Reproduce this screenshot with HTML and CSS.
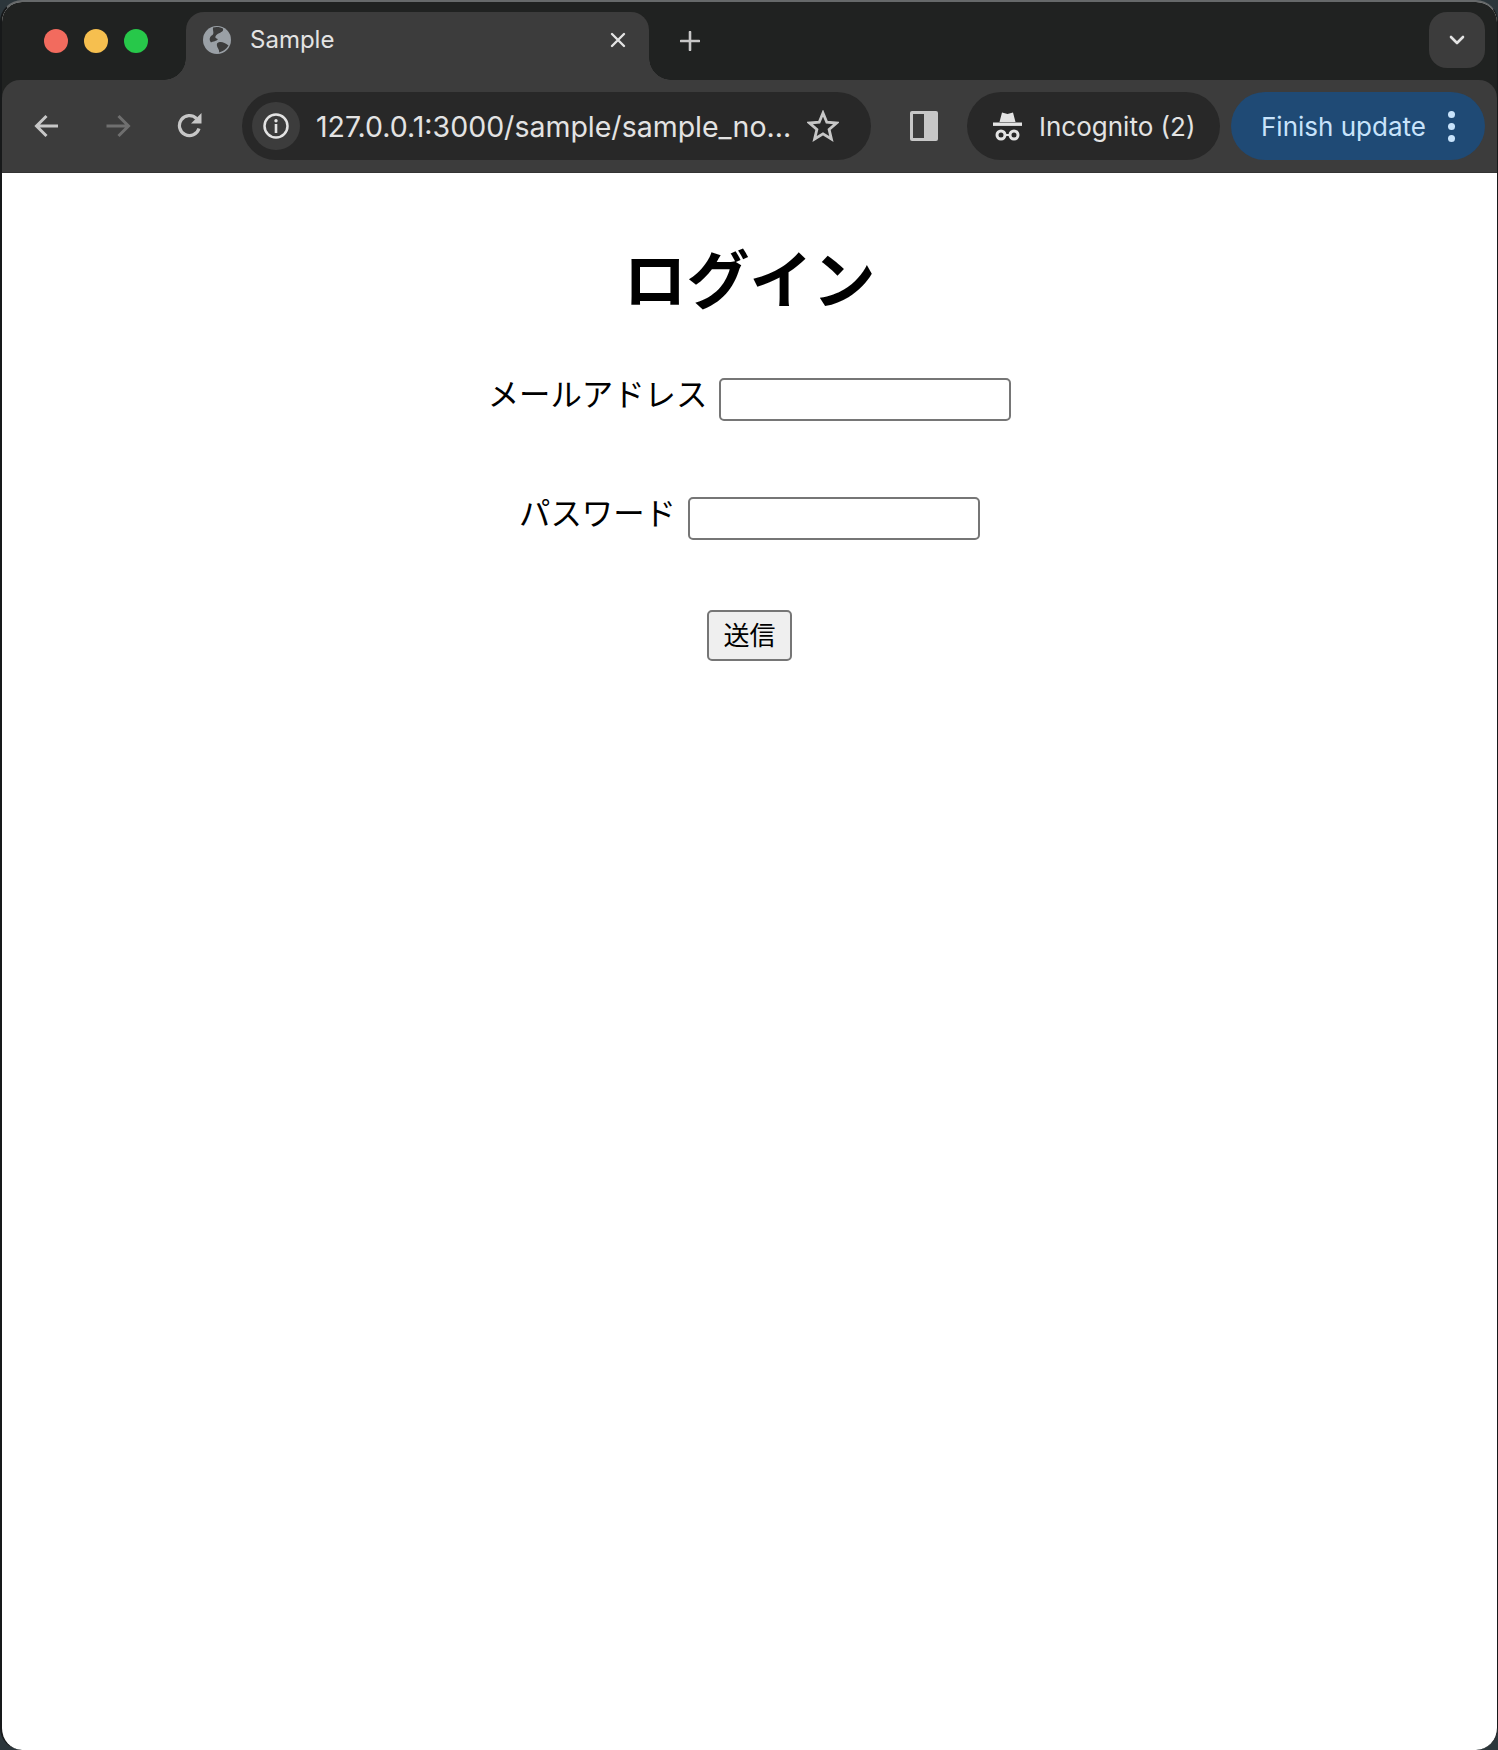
FILE: index.html
```html
<!DOCTYPE html>
<html lang="ja">
<head>
  <meta charset="UTF-8">
  <meta name="viewport" content="width=device-width, initial-scale=1.0">
  <title>Sample</title>
  <link rel="stylesheet" href="styles.css">
</head>
<body>
  <div class="window">
    <header class="browser">
      <div class="tabstrip">
        <div class="lights">
          <span class="light red"></span>
          <span class="light yellow"></span>
          <span class="light green"></span>
        </div>
        <div class="tab">
          <svg class="favicon" viewBox="0 0 28 28">
            <circle cx="14" cy="14" r="14" fill="#9aa0a6"/>
            <path d="M10 1.500 C13 0.500 18 1 20 2.500 C21 6 16.500 6.500 14 8.500 C11.500 10.500 12 12.500 15 13 C13.500 15.500 10 15 8 16.500 C5.500 13.500 7 10 9.500 9 C11.500 7.500 9.500 4.500 10 1.500 Z" fill="#3c3c3c"/>
            <path d="M14 17.500 C17 15 21 16 25.500 19.500 C23 23.500 19.500 25.500 16 26.500 C17 23 13 21.500 14 17.500 Z" fill="#3c3c3c"/>
          </svg>
          <span class="tab-title">Sample</span>
          <svg class="tab-close" viewBox="0 0 16 16">
            <path d="M2 2 L14 14 M14 2 L2 14" stroke="#e3e3e3" stroke-width="2.400" stroke-linecap="round"/>
          </svg>
        </div>
        <svg class="new-tab" viewBox="0 0 20 20">
          <path d="M10 1 V19 M1 10 H19" stroke="#c7c7c7" stroke-width="2.600" stroke-linecap="round"/>
        </svg>
        <div class="tab-search">
          <svg class="chevron" viewBox="0 0 16 10">
            <path d="M2 2 L8 8 L14 2" fill="none" stroke="#e3e3e3" stroke-width="2.600" stroke-linecap="round" stroke-linejoin="round"/>
          </svg>
        </div>
      </div>

      <div class="toolbar">
        <svg class="nav-icon back" viewBox="0 0 26 26">
          <path d="M24 13 H3.500 M12.500 3 L2.500 13 L12.500 23" fill="none" stroke="#c7c7c7" stroke-width="3"/>
        </svg>
        <svg class="nav-icon forward" viewBox="0 0 26 26">
          <path d="M1.500 13 H22.500 M13.500 3 L23.500 13 L13.500 23" fill="none" stroke="#6f6f6f" stroke-width="3"/>
        </svg>
        <svg class="nav-icon reload" viewBox="0 0 26 26">
          <path d="M22 15.500 A10 10 0 1 1 19.500 5.500" fill="none" stroke="#c7c7c7" stroke-width="3.200"/>
          <path d="M14 10.500 H24.500 V0 Z" fill="#c7c7c7"/>
        </svg>
        <div class="omnibox">
          <span class="site-info">
            <svg class="info-icon" viewBox="0 0 28 28">
              <circle cx="14" cy="14" r="11.500" fill="none" stroke="#e3e3e3" stroke-width="2.500"/>
              <circle cx="14" cy="8.800" r="1.700" fill="#e3e3e3"/>
              <rect x="12.700" y="12" width="2.600" height="9" fill="#e3e3e3"/>
            </svg>
          </span>
          <span class="url">127.0.0.1:3000/sample/sample_no...</span>
          <svg class="star" viewBox="0 0 32 32">
            <path d="M16 3 L19.800 12.200 L29.500 13 L22.100 19.400 L24.400 29 L16 23.800 L7.600 29 L9.900 19.400 L2.500 13 L12.200 12.200 Z" fill="none" stroke="#c7c7c7" stroke-width="2.800"/>
          </svg>
        </div>
        <svg class="side-panel" viewBox="0 0 28 30">
          <rect x="0" y="0" width="28" height="30" rx="2" fill="#c7c7c7"/>
          <rect x="3" y="3" width="11" height="24" fill="#3c3c3c"/>
        </svg>
        <div class="profile">
          <svg class="incognito" viewBox="0 0 29 31">
            <path d="M6.500 11 L9 1.500 L14.500 3 L20 1.500 L22.500 11 Z" fill="#e3e3e3"/>
            <rect x="0" y="11.500" width="29" height="3.400" fill="#e3e3e3"/>
            <circle cx="8" cy="24" r="4" fill="none" stroke="#e3e3e3" stroke-width="3"/>
            <circle cx="21" cy="24" r="4" fill="none" stroke="#e3e3e3" stroke-width="3"/>
            <rect x="11" y="23" width="7" height="2" fill="#e3e3e3"/>
          </svg>
          <span>Incognito (2)</span>
        </div>
        <div class="update">
          <span>Finish update</span>
          <span class="dots"><i></i><i></i><i></i></span>
        </div>
      </div>
    </header>

    <main class="page">
      <h1>ログイン</h1>
      <form>
        <div class="field">
          <label for="email">メールアドレス</label>
          <input id="email" type="text">
        </div>
        <div class="field">
          <label for="password">パスワード</label>
          <input id="password" type="password">
        </div>
        <div class="actions">
          <button type="submit">送信</button>
        </div>
      </form>
    </main>
  </div>
</body>
</html>
```

FILE: styles.css
```css
* {
  box-sizing: border-box;
}

body {
  margin: 0;
  background-color: #2c363b;
  font-family: Inter, "Noto Sans CJK JP", sans-serif;
}

.window {
  width: 1498px;
  height: 1750px;
  display: flex;
  flex-direction: column;
  background-color: #fff;
  border-left: 2px solid #17191a;
  border-right: 1px solid #17191a;
  border-top: 2px solid #66696a;
  border-radius: 22px;
  overflow: hidden;
}

.browser {
  flex-shrink: 0;
  background-color: #202221;
}

/* tab strip */
.tabstrip {
  height: 78px;
  display: flex;
  align-items: flex-start;
  padding-top: 10px;
}

.lights {
  display: flex;
  gap: 16px;
  margin: 17px 38px 0 42px;
}

.light {
  width: 24px;
  height: 24px;
  border-radius: 50%;
}

.red { background-color: #f26b5e; }
.yellow { background-color: #f6bf4f; }
.green { background-color: #27c84a; }

.tab {
  position: relative;
  width: 463px;
  height: 68px;
  display: flex;
  align-items: flex-start;
  padding: 14px 23px 0 17px;
  background-color: #3c3c3c;
  border-radius: 18px 18px 0 0;
  color: #e3e3e3;
  font-size: 24px;
}

.tab::before,
.tab::after {
  content: "";
  position: absolute;
  bottom: 0;
  width: 22px;
  height: 22px;
}

.tab::before {
  left: -22px;
  background: radial-gradient(circle at 0 0, transparent 21.500px, #3c3c3c 22px);
}

.tab::after {
  right: -22px;
  background: radial-gradient(circle at 100% 0, transparent 21.500px, #3c3c3c 22px);
}

.favicon {
  width: 28px;
  height: 28px;
  flex-shrink: 0;
}

.tab-title {
  margin-left: 19px;
  line-height: 28px;
  flex: 1;
}

.tab-close {
  width: 16px;
  height: 16px;
  margin-top: 6px;
}

.new-tab {
  width: 20px;
  height: 20px;
  margin: 19px 0 0 31px;
}

.tab-search {
  width: 56px;
  height: 56px;
  margin-left: auto;
  margin-right: 12px;
  display: flex;
  align-items: center;
  justify-content: center;
  background-color: #3c3c3c;
  border-radius: 18px;
}

.chevron {
  width: 16px;
  height: 10px;
}

/* toolbar */
.toolbar {
  height: 93px;
  display: flex;
  align-items: center;
  background-color: #3c3c3c;
  border-bottom: 1px solid #333;
  border-radius: 18px 18px 0 0;
}

.nav-icon {
  width: 26px;
  height: 26px;
  flex-shrink: 0;
}

.back { margin-left: 32px; }
.forward { margin-left: 45px; }
.reload { margin-left: 46px; }

.omnibox {
  width: 629px;
  height: 68px;
  margin-left: 39px;
  display: flex;
  align-items: center;
  padding-left: 10px;
  background-color: #282828;
  border-radius: 34px;
  flex-shrink: 0;
}

.site-info {
  width: 48px;
  height: 48px;
  display: flex;
  align-items: center;
  justify-content: center;
  background-color: #3c3c3c;
  border-radius: 50%;
  flex-shrink: 0;
}

.info-icon {
  width: 28px;
  height: 28px;
}

.url {
  margin-left: 16px;
  color: #e3e3e3;
  font-size: 28.500px;
  white-space: nowrap;
  flex: 1;
}

.star {
  width: 32px;
  height: 32px;
  margin-right: 32px;
  flex-shrink: 0;
}

.side-panel {
  width: 28px;
  height: 30px;
  margin-left: 39px;
  flex-shrink: 0;
}

.profile {
  width: 253px;
  height: 68px;
  margin-left: 29px;
  display: flex;
  align-items: center;
  padding-left: 26px;
  gap: 17px;
  background-color: #282828;
  border-radius: 34px;
  color: #e3e3e3;
  font-size: 26px;
  flex-shrink: 0;
}

.incognito {
  width: 29px;
  height: 31px;
}

.update {
  width: 254px;
  height: 68px;
  margin-left: 11px;
  display: flex;
  align-items: center;
  padding-left: 30px;
  background-color: #1f4a75;
  border-radius: 34px;
  color: #c8e3fb;
  font-size: 26px;
  flex-shrink: 0;
}

.dots {
  display: flex;
  flex-direction: column;
  gap: 5px;
  margin-left: 22px;
}

.dots i {
  width: 7px;
  height: 7px;
  border-radius: 50%;
  background-color: #c8e3fb;
}

/* login form */
.page {
  flex: 1;
  padding-top: 68px;
  text-align: center;
  color: #000;
  font-family: "Noto Sans CJK JP", sans-serif;
}

h1 {
  margin: 0 0 67px;
  font-size: 63px;
  font-weight: bold;
  line-height: 70px;
}

.field {
  display: flex;
  justify-content: center;
  align-items: center;
  gap: 12px;
  height: 43px;
  margin-bottom: 76px;
}

.field label {
  font-size: 31.400px;
  line-height: 42px;
  margin-bottom: 13px;
}

.field input {
  width: 292px;
  height: 43px;
  padding: 2px 4px;
  background-color: #fff;
  border: 2px solid #767676;
  border-radius: 5px;
}

.actions {
  margin-top: -6px;
}

button {
  width: 85px;
  height: 51px;
  padding: 0 0 4px;
  background-color: #efefef;
  border: 2px solid #767676;
  border-radius: 5px;
  color: #000;
  font-family: "Noto Sans CJK JP", sans-serif;
  font-size: 26px;
  line-height: 40px;
}
```
